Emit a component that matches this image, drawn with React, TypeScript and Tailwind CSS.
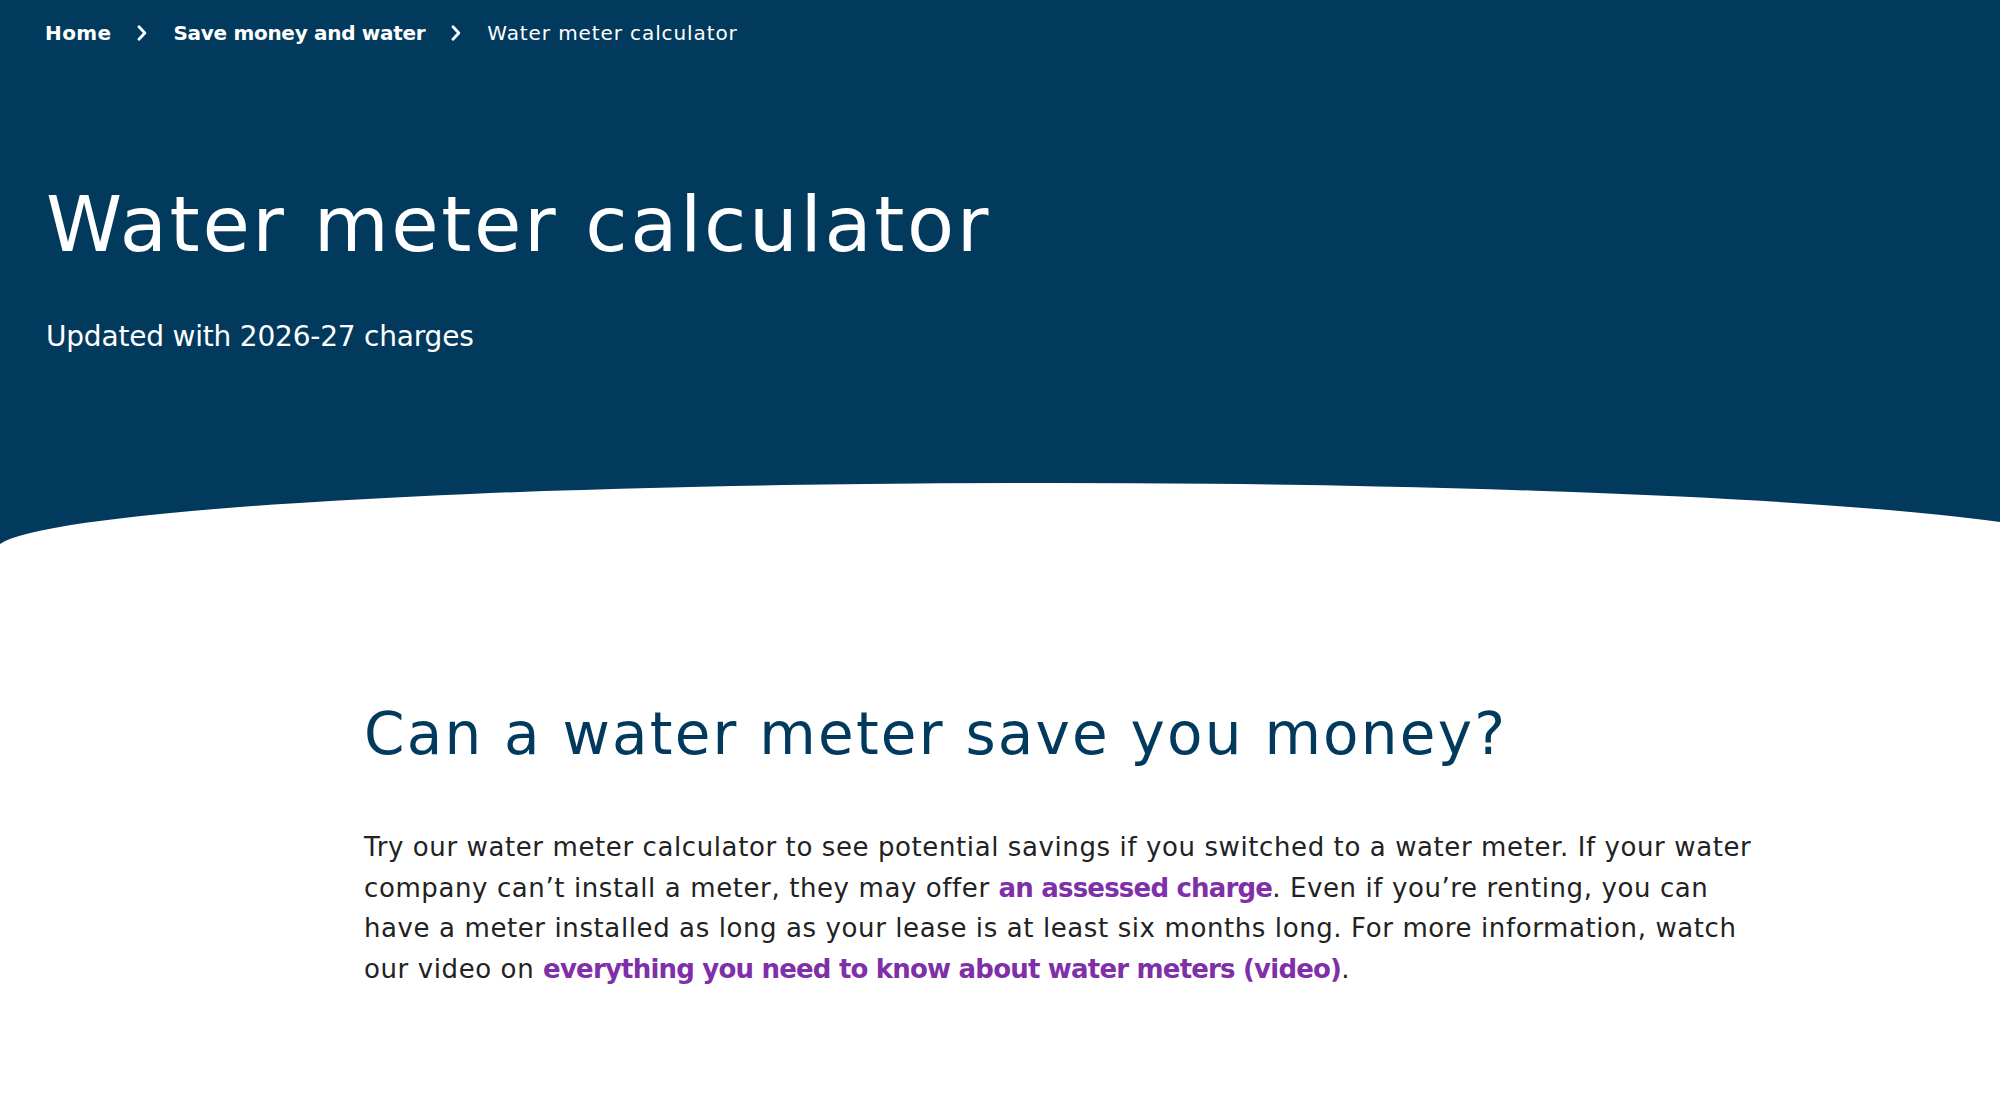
import React from 'react';

const Chevron: React.FC = () => (
  <svg width="10" height="16" viewBox="0 0 10 16" fill="none" aria-hidden="true">
    <path d="M2 1.8 L7.8 8 L2 14.2" stroke="currentColor" strokeWidth="2.8" strokeLinecap="round" strokeLinejoin="round" />
  </svg>
);

const App: React.FC = () => {
  return (
    <div className="min-h-screen bg-white font-['DejaVu_Sans','Liberation_Sans',sans-serif]">
      {/* Hero */}
      <header className="bg-[#023a5e] text-white">
        <nav className="flex items-center gap-[26px] px-[45px] pt-[23px] text-[20px] leading-[20px]">
          <a href="#" className="font-bold tracking-[0.4px]">Home</a>
          <Chevron />
          <a href="#" className="font-bold tracking-[-0.3px]">Save money and water</a>
          <Chevron />
          <span className="font-normal tracking-[0.9px]">Water meter calculator</span>
        </nav>

        <div className="px-[46px]">
          <h1 className="mt-[143px] text-[77px] leading-[77px] font-normal tracking-[2.6px]">
            Water meter calculator
          </h1>
          <p className="mt-[60px] text-[28px] leading-[28px] font-normal tracking-[-0.2px]">
            Updated with 2026-27 charges
          </p>
        </div>

        <svg className="mt-[119px] block h-[90px] w-full" viewBox="0 0 2000 90" preserveAspectRatio="none" aria-hidden="true">
          <path d="M0 74 A1050 67 0 0 1 2000 52 L2000 90 L0 90 Z" fill="#ffffff" />
        </svg>
      </header>

      {/* Intro */}
      <main className="ml-[364px] w-[1408px] pb-24">
        <h2 className="mt-[145px] text-[58px] leading-[58px] font-normal text-[#023a5e] tracking-[2.2px]">
          Can a water meter save you money?
        </h2>
        <p className="mt-[64px] text-[26px] leading-[40.5px] text-[#222222] tracking-[0.6px]">
          Try our water meter calculator to see potential savings if you switched to a water meter. If your water
          company can’t install a meter, they may offer{' '}
          <a href="#" className="font-bold tracking-[-0.8px] text-[#7f2fa8]">an assessed charge</a>. Even if you’re
          renting, you can have a meter installed as long as your lease is at least six months long. For more
          information, watch our video on{' '}
          <a href="#" className="font-bold tracking-[-0.8px] text-[#7f2fa8]">
            everything you need to know about water meters (video)
          </a>
          .
        </p>
      </main>
    </div>
  );
};

export default App;
